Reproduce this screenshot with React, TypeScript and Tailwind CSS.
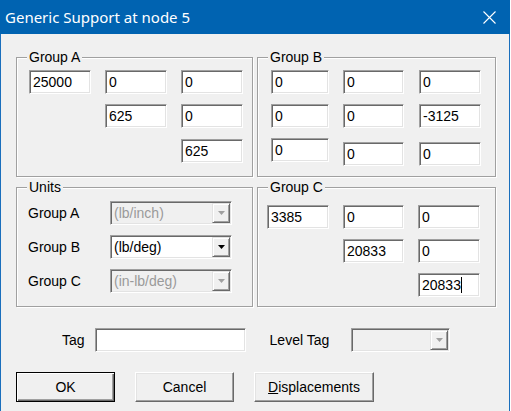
import React from "react";

const font = { fontFamily: '"Liberation Sans", Arial, sans-serif' };

function Field({ v, w = "w-[62px]", extra = "", caret = false }: { v: string; w?: string; extra?: string; caret?: boolean }) {
  return (
    <div
      className={`${w} ${extra} h-[24px] bg-white border border-t-[#a0a0a0] border-l-[#a0a0a0] border-b-white border-r-white shadow-[inset_1px_1px_0_#696969,inset_-1px_-1px_0_#e3e3e3] pl-[3px] flex items-center text-[14px] leading-none text-black`}
    >
      <span>{v}</span>
      {caret && <span className="inline-block w-[1px] h-[16px] bg-black ml-[0px]" />}
    </div>
  );
}

function Arrow({ disabled }: { disabled?: boolean }) {
  return (
    <svg width="7" height="4" viewBox="0 0 7 4">
      <polygon points="0,0 7,0 3.5,4" fill={disabled ? "#a0a0a0" : "#000"} />
    </svg>
  );
}

function Combo({ text, disabled, w = "w-[122px]" }: { text: string; disabled?: boolean; w?: string }) {
  return (
    <div
      className={`${w} h-[24px] flex border border-t-[#a0a0a0] border-l-[#a0a0a0] border-b-white border-r-white shadow-[inset_1px_1px_0_#696969,inset_-1px_-1px_0_#e3e3e3] p-[1px] ${
        disabled ? "bg-[#f0f0f0]" : "bg-white"
      }`}
    >
      <div className={`flex-1 flex items-center pl-[2px] text-[14px] leading-none ${disabled ? "text-[#9a9a9a]" : "text-black"}`}>
        {text}
      </div>
      <div className="w-[18px] flex items-center justify-center bg-[#f0f0f0] border border-t-[#e3e3e3] border-l-[#e3e3e3] border-b-[#696969] border-r-[#696969] shadow-[inset_1px_1px_0_#fff,inset_-1px_-1px_0_#a0a0a0]">
        <Arrow disabled={disabled} />
      </div>
    </div>
  );
}

function Group({ label, children, className = "" }: { label: string; children: React.ReactNode; className?: string }) {
  return (
    <div className={`relative h-[120px] border border-[#a0a0a0] shadow-[inset_1px_1px_0_#fff,1px_1px_0_#fff] ${className}`}>
      <span className="absolute left-[10px] top-[-9px] bg-[#f0f0f0] px-[2px] text-[14px] leading-[16px] text-black">{label}</span>
      {children}
    </div>
  );
}

function Btn({ children, def = false, w }: { children: React.ReactNode; def?: boolean; w: string }) {
  return (
    <div
      className={`${w} h-[30px] flex items-center justify-center bg-[#f0f0f0] text-[14px] text-black ${
        def
          ? "border border-black shadow-[inset_1px_1px_0_#fff,inset_-1px_-1px_0_#696969,inset_-2px_-2px_0_#a0a0a0]"
          : "border border-t-white border-l-white border-b-[#696969] border-r-[#696969] shadow-[inset_-1px_-1px_0_#a0a0a0,inset_1px_1px_0_#e3e3e3]"
      }`}
    >
      {children}
    </div>
  );
}

export default function App() {
  return (
    <div className="w-[511px] h-[411px] bg-white overflow-hidden" style={font}>
      <div className="w-[510px] h-[411px] bg-[#f0f0f0] border-x border-[#1a6fbd] flex flex-col">
        {/* Title bar */}
        <div className="h-[34px] bg-[#0063b1] flex items-center justify-between pl-[5px] pr-[14px] -mx-[1px]">
          <span className="text-white text-[15px]" style={{ fontFamily: '"Noto Sans", "Open Sans", sans-serif' }}>
            Generic Support at node 5
          </span>
          <svg width="13" height="13" viewBox="0 0 13 13">
            <path d="M0.5 0.5 L12.5 12.5 M12.5 0.5 L0.5 12.5" stroke="#fff" strokeWidth="1.1" />
          </svg>
        </div>

        {/* Body */}
        <div className="pt-[23px] pl-[15px]">
          <div className="grid grid-cols-[237px_239px] gap-x-[4px] gap-y-[10px]">
            {/* Group A */}
            <Group label="Group A">
              <div className="pt-[12px] pl-[12px] grid grid-cols-[62px_62px_62px] gap-x-[14px] gap-y-[10px]">
                <Field v="25000" />
                <Field v="0" />
                <Field v="0" />
                <div />
                <Field v="625" />
                <Field v="0" />
                <div />
                <div />
                <Field v="625" extra="mt-[1px]" />
              </div>
            </Group>

            {/* Group B */}
            <Group label="Group B">
              <div className="pt-[12px] pl-[13px] grid grid-cols-[58px_62px_62px] gap-x-[14px] gap-y-[10px]">
                <Field v="0" w="w-[58px]" />
                <Field v="0" w="w-[61px]" />
                <Field v="0" />
                <Field v="0" w="w-[58px]" />
                <Field v="0" w="w-[61px]" />
                <Field v="-3125" />
                <Field v="0" w="w-[58px]" />
                <Field v="0" w="w-[61px]" extra="mt-[4px]" />
                <Field v="0" extra="mt-[4px]" />
              </div>
            </Group>

            {/* Units */}
            <Group label="Units">
              <div className="pt-[13px] pl-[11px] flex flex-col gap-[10px]">
                <div className="flex items-center">
                  <span className="w-[82px] text-[14px]">Group A</span>
                  <Combo text="(lb/inch)" disabled />
                </div>
                <div className="flex items-center">
                  <span className="w-[82px] text-[14px]">Group B</span>
                  <Combo text="(lb/deg)" />
                </div>
                <div className="flex items-center">
                  <span className="w-[82px] text-[14px]">Group C</span>
                  <Combo text="(in-lb/deg)" disabled />
                </div>
              </div>
            </Group>

            {/* Group C */}
            <Group label="Group C">
              <div className="pt-[17px] pl-[9px] grid grid-cols-[62px_61px_62px] gap-x-[14px] gap-y-[10px]">
                <Field v="3385" />
                <Field v="0" w="w-[61px]" />
                <Field v="0" />
                <div />
                <Field v="20833" w="w-[61px]" />
                <Field v="0" />
                <div />
                <div />
                <Field v="20833" caret />
              </div>
            </Group>
          </div>
        </div>

        {/* Tag row */}
        <div className="mt-[21px] flex items-center pl-[61px]">
          <span className="text-[14px]">Tag</span>
          <Field v="" w="w-[151px]" extra="ml-[10px]" />
          <span className="text-[14px] ml-[24px]">Level Tag</span>
          <div className="ml-[22px]">
            <Combo text="" disabled w="w-[99px]" />
          </div>
        </div>

        {/* Buttons */}
        <div className="mt-[20px] flex pl-[15px] gap-[20px]">
          <Btn def w="w-[99px]">OK</Btn>
          <Btn w="w-[99px]">Cancel</Btn>
          <Btn w="w-[120px]">
            <span>
              <span className="underline">D</span>isplacements
            </span>
          </Btn>
        </div>
      </div>
    </div>
  );
}
